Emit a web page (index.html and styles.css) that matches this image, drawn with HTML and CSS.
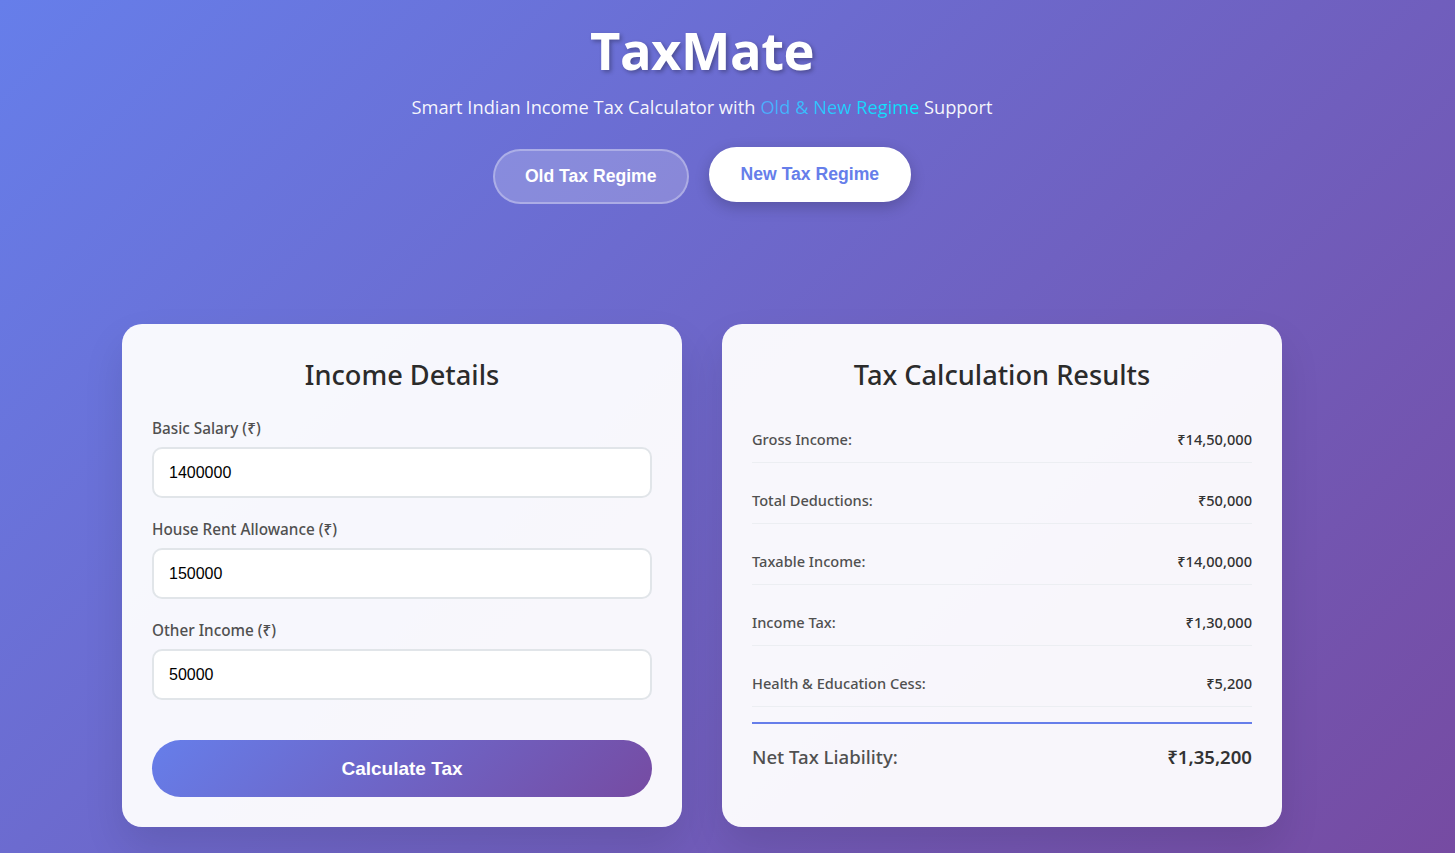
FILE: index.html
```html
<!DOCTYPE html>
<html lang="en">
<head>
<meta charset="UTF-8">
<title>TaxMate</title>
<link rel="stylesheet" href="styles.css">
</head>
<body>
<div class="page">
  <header class="header">
    <h1 class="title">TaxMate</h1>
    <p class="subtitle">Smart Indian Income Tax Calculator with <span class="highlight">Old &amp; New Regime</span> Support</p>
    <div class="toggle">
      <button class="regime-btn">Old Tax Regime</button>
      <button class="regime-btn active">New Tax Regime</button>
    </div>
  </header>
  <main class="container">
    <section class="card">
      <h2 class="card-title">Income Details</h2>
      <div class="field">
        <label class="field-label">Basic Salary (₹)</label>
        <input class="field-input" type="text" value="1400000">
      </div>
      <div class="field">
        <label class="field-label">House Rent Allowance (₹)</label>
        <input class="field-input" type="text" value="150000">
      </div>
      <div class="field">
        <label class="field-label">Other Income (₹)</label>
        <input class="field-input" type="text" value="50000">
      </div>
      <button class="calc-btn">Calculate Tax</button>
    </section>
    <section class="card">
      <h2 class="card-title">Tax Calculation Results</h2>
      <div class="row"><span class="row-label">Gross Income:</span><span class="row-value">₹14,50,000</span></div>
      <div class="row"><span class="row-label">Total Deductions:</span><span class="row-value">₹50,000</span></div>
      <div class="row"><span class="row-label">Taxable Income:</span><span class="row-value">₹14,00,000</span></div>
      <div class="row"><span class="row-label">Income Tax:</span><span class="row-value">₹1,30,000</span></div>
      <div class="row"><span class="row-label">Health &amp; Education Cess:</span><span class="row-value">₹5,200</span></div>
      <div class="total"><span class="total-label">Net Tax Liability:</span><span class="total-value">₹1,35,200</span></div>
    </section>
  </main>
</div>
</body>
</html>
```

FILE: styles.css
```css
* { box-sizing: border-box; }
html, body { margin: 0; padding: 0; }
body {
  min-height: 100vh;
  font-family: "Open Sans", "Noto Sans", sans-serif;
  background: linear-gradient(135deg, #667eea 0%, #764ba2 100%);
  color: #333;
}
.page {
  width: 1404px;
  padding-top: 14px;
}
.header {
  display: flex;
  flex-direction: column;
  align-items: center;
  color: #fff;
}
.title {
  margin: 0;
  font-size: 52.5px;
  font-weight: 700;
  line-height: 72px;
  letter-spacing: -0.5px;
  text-shadow: 2px 2px 4px rgba(0,0,0,0.3);
}
.subtitle {
  margin: 9px 0 0;
  font-size: 18.3px;
  line-height: 24px;
  color: rgba(255,255,255,0.95);
}
.highlight {
  background: linear-gradient(90deg, #4facfe 0%, #00f2fe 100%);
  -webkit-background-clip: text;
  background-clip: text;
  color: transparent;
}
.toggle {
  display: flex;
  gap: 20px;
  margin-top: 30px;
  align-items: flex-start;
}
.regime-btn {
  font-family: "Liberation Sans", Arial, sans-serif;
  font-size: 17.6px;
  font-weight: 700;
  padding: 15px 30px;
  height: 55px;
  border-radius: 30px;
  border: 2px solid rgba(255,255,255,0.3);
  background: rgba(255,255,255,0.2);
  color: #fff;
  cursor: pointer;
}
.regime-btn.active {
  background: #fff;
  color: #667eea;
  border-color: #fff;
  transform: translateY(-2px);
  box-shadow: 0 5px 15px rgba(0,0,0,0.2);
}
.container {
  max-width: 1200px;
  margin: 120px auto 0;
  padding: 0 20px 25px;
  display: grid;
  grid-template-columns: 1fr 1fr;
  gap: 40px;
}
.card {
  background: rgba(255,255,255,0.95);
  border-radius: 20px;
  padding: 30px;
  box-shadow: 0 20px 40px rgba(0,0,0,0.1);
  font-family: "Noto Sans", "Open Sans", sans-serif;
}
.card-title {
  margin: 0 0 21px;
  text-align: center;
  font-size: 27.2px;
  font-weight: 500;
  line-height: 42px;
  color: #2b2b2b;
}
.field { margin-bottom: 20px; }
.field-label {
  display: block;
  font-size: 15.3px;
  line-height: 22px;
  font-weight: 500;
  color: #505050;
  margin-bottom: 8px;
}
.field-input {
  display: block;
  width: 100%;
  height: 51px;
  padding: 0 15px;
  border: 2px solid #e1e5e9;
  border-radius: 10px;
  background: #fff;
  font-family: "Liberation Sans", Arial, sans-serif;
  font-size: 16px;
  color: #000;
}
.calc-btn {
  display: block;
  width: 100%;
  height: 57px;
  margin-top: 40px;
  border: none;
  border-radius: 30px;
  background: linear-gradient(135deg, #667eea 0%, #764ba2 100%);
  color: #fff;
  font-family: "Liberation Sans", Arial, sans-serif;
  font-size: 19px;
  font-weight: 700;
}
.row {
  display: flex;
  justify-content: space-between;
  align-items: center;
  padding: 12px 0;
  line-height: 21px;
  border-bottom: 1px solid #eceef2;
  margin-bottom: 15px;
  font-size: 14.6px;
}
.row-label { color: #505050; font-weight: 500; }
.row-value { color: #333; font-weight: 500; }
.total {
  display: flex;
  justify-content: space-between;
  align-items: center;
  border-top: 2px solid #667eea;
  padding-top: 20px;
  line-height: 26px;
  font-size: 18.6px;
}
.total-label { color: #505050; font-weight: 500; }
.total-value { color: #333; font-weight: 600; }
```
